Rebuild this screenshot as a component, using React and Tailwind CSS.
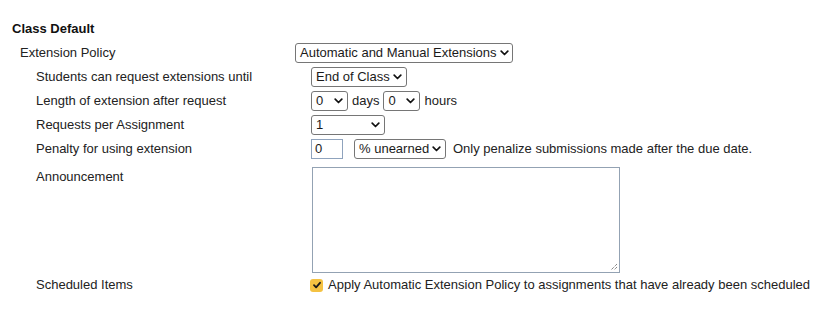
const font = { fontFamily: '"Liberation Sans", Arial, sans-serif' }

function Chevron() {
  return (
    <svg width="9" height="6" viewBox="0 0 9 6" className="shrink-0">
      <path d="M1.2 1.2 L4.5 4.5 L7.8 1.2" fill="none" stroke="#111" strokeWidth="1.7" strokeLinecap="round" strokeLinejoin="round" />
    </svg>
  )
}

function Select({ value, width }) {
  return (
    <div
      className="h-[20px] flex items-center justify-between gap-[3px] border border-[#767676] rounded-[3px] bg-white pl-[4px] pr-[4px] text-[13px] text-[#1a1a1a]"
      style={{ width }}
    >
      <span className="whitespace-nowrap">{value}</span>
      <Chevron />
    </div>
  )
}

function Row({ label, children }) {
  return (
    <div className="flex items-center min-h-[24px]">
      <div className="w-[275px] shrink-0">{label}</div>
      <div className="flex items-center">{children}</div>
    </div>
  )
}

export default function App() {
  return (
    <div className="w-[834px] h-[313px] bg-white text-[13px] text-[#222] pt-[17px]" style={font}>
      <div className="pl-[12px] h-[24px] flex items-center font-bold text-[#111]">Class Default</div>
      <div className="pl-[20px]">
        <Row label="Extension Policy">
          <Select value="Automatic and Manual Extensions" width={218} />
        </Row>
        <div className="pl-[16px]">
          <Row label="Students can request extensions until">
            <Select value="End of Class" width={96} />
          </Row>
          <Row label="Length of extension after request">
            <Select value="0" width={37} />
            <span className="ml-[4px] mr-[4px]">days</span>
            <Select value="0" width={37} />
            <span className="ml-[4px]">hours</span>
          </Row>
          <Row label="Requests per Assignment">
            <Select value="1" width={74} />
          </Row>
          <Row label="Penalty for using extension">
            <div className="w-[32px] h-[20px] border border-[#8fa3bd] bg-white pl-[3px] flex items-center text-[13px] text-[#1a1a1a]">0</div>
            <div className="ml-[11px]">
              <Select value="% unearned" width={92} />
            </div>
            <span className="ml-[7px]">Only penalize submissions made after the due date.</span>
          </Row>
          <div className="flex items-start mt-[6px]">
            <div className="w-[275px] shrink-0">Announcement</div>
            <div className="relative w-[308px] h-[106px] border border-[#93a2b3] bg-white ml-[1px]">
              <svg width="9" height="9" viewBox="0 0 9 9" className="absolute right-[1px] bottom-[1px]">
                <path d="M8 2 L2 8 M8 5 L5 8" stroke="#555" strokeWidth="1" strokeDasharray="1 1" />
              </svg>
            </div>
          </div>
          <Row label="Scheduled Items">
            <div className="w-[13px] h-[13px] -ml-[1px] rounded-[3px] bg-[#f4c242] flex items-center justify-center">
              <svg width="10" height="10" viewBox="0 0 10 10">
                <path d="M2 5.2 L4.1 7.3 L8 2.8" fill="none" stroke="#1a1a1a" strokeWidth="1.8" strokeLinecap="round" strokeLinejoin="round" />
              </svg>
            </div>
            <span className="ml-[5px] whitespace-nowrap">Apply Automatic Extension Policy to assignments that have already been scheduled</span>
          </Row>
        </div>
      </div>
    </div>
  )
}
